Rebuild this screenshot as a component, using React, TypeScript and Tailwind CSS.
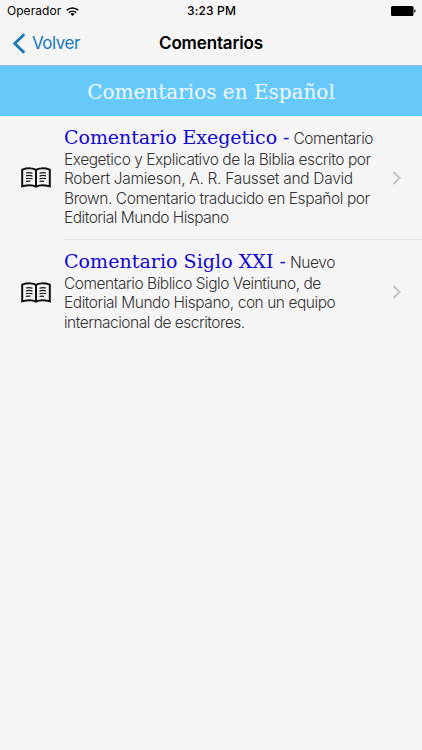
type Line = { text: string; cls: string };

type Comentario = {
  title: string;
  titleCls: string;
  lead: Line;
  lines: Line[];
  rowCls: string;
};

const comentarios: Comentario[] = [
  {
    title: "Comentario Exegetico -",
    titleCls: "tracking-[-0.05px]",
    lead: { text: "Comentario", cls: "tracking-[-0.42px]" },
    lines: [
      { text: "Exegetico y Explicativo de la Biblia escrito por", cls: "tracking-[-0.46px]" },
      { text: "Robert Jamieson, A. R. Fausset and David", cls: "tracking-[-0.3px]" },
      { text: "Brown. Comentario traducido en Español por", cls: "tracking-[-0.42px]" },
      { text: "Editorial Mundo Hispano", cls: "tracking-[-0.5px]" },
    ],
    rowCls: "h-[124px]",
  },
  {
    title: "Comentario Siglo XXI -",
    titleCls: "tracking-[0.05px]",
    lead: { text: "Nuevo", cls: "tracking-[-0.42px]" },
    lines: [
      { text: "Comentario Bíblico Siglo Veintiuno, de", cls: "tracking-[-0.47px]" },
      { text: "Editorial Mundo Hispano, con un equipo", cls: "tracking-[-0.45px]" },
      { text: "internacional de escritores.", cls: "tracking-[-0.5px]" },
    ],
    rowCls: "h-[105px]",
  },
];

export default function App() {
  return (
    <div className="h-[750px] w-[422px] overflow-hidden bg-[#f5f5f5] font-['Inter',sans-serif] text-black">
      <StatusBar />
      <NavBar />
      <h2 className="flex h-[51px] items-center justify-center border-t border-[#8fbcd3] bg-[#67c8fa] pt-px font-['DejaVu_Serif',serif] text-[20px] font-light whitespace-nowrap text-white/90">
        Comentarios en Español
      </h2>
      <ul>
        {comentarios.map((c, i) => (
          <Row key={c.title} item={c} last={i === comentarios.length - 1} />
        ))}
      </ul>
    </div>
  );
}

function StatusBar() {
  return (
    <div className="grid h-[22px] grid-cols-3 items-center pr-1.5 pl-[7px] text-[12px] leading-none">
      <div className="flex items-center gap-[5px]">
        <span className="tracking-[0.05px]">Operador</span>
        <WifiIcon />
      </div>
      <span className="text-center font-medium tracking-[0.15px] whitespace-nowrap">3:23 PM</span>
      <BatteryIcon />
    </div>
  );
}

function NavBar() {
  return (
    <header className="grid h-[43px] grid-cols-3 items-center pl-3">
      <button type="button" className="flex items-center gap-[6px] text-[17px] tracking-[-0.5px] text-[#1878be]">
        <svg className="h-[21px] w-[14px]" viewBox="0 0 14 21" fill="none" aria-hidden="true">
          <path d="M12.3 1.2 2.7 10.500l9.600 9.300" stroke="currentColor" strokeWidth="2.800" />
        </svg>
        Volver
      </button>
      <h1 className="pr-3 text-center text-[17px] font-semibold tracking-[-0.15px]">Comentarios</h1>
    </header>
  );
}

function Row({ item, last }: { item: Comentario; last: boolean }) {
  return (
    <li className={["flex", item.rowCls].join(" ")}>
      <div className="flex w-16 shrink-0 items-center pl-[21px]">
        <BookIcon />
      </div>
      <div
        className={[
          "flex flex-1 items-center border-b",
          last ? "border-transparent" : "border-[#e5e5e6]",
        ].join(" ")}
      >
        <div className="w-[328px] pb-[3px] text-[15.5px] leading-[19.2px] font-light whitespace-nowrap text-[#333]">
          <p className="flex h-[25px] items-baseline gap-1 leading-[25px]">
            <span
              className={[
                "font-['DejaVu_Serif',serif] text-[19px] font-normal text-[#1207d0]",
                item.titleCls,
              ].join(" ")}
            >
              {item.title}
            </span>
            <span className={item.lead.cls}>{item.lead.text}</span>
          </p>
          {item.lines.map((l) => (
            <p key={l.text} className={l.cls}>
              {l.text}
            </p>
          ))}
        </div>
        <svg className="h-[14px] w-[9px] text-[#c5c5c8]" viewBox="0 0 9 14" fill="none" aria-hidden="true">
          <path d="m1.500 1 6 6-6 6" stroke="currentColor" strokeWidth="2" />
        </svg>
      </div>
    </li>
  );
}

function BookIcon() {
  return (
    <svg className="h-[22px] w-[30px]" viewBox="0 0 30 22" fill="none" stroke="#111" aria-hidden="true">
      <path
        d="M15 3C13 1 6.500.8 1.200 2.600v16.800c5-1.500 11-1.400 13.800.3 2.800-1.700 8.800-1.800 13.800-.3V2.600C23.500.8 17 1 15 3Z"
        strokeWidth="2"
      />
      <path d="M15 3v17" strokeWidth="2" />
      <path
        d="M5 6q3.500-.8 6.500.3M5 8.800q3.500-.8 6.500.3M5 11.600q3.500-.8 6.500.3M5 14.400q2.500-.6 4.500-.2M18.500 6.300q3-1.100 6.500-.3M18.500 9.100q3-1.100 6.500-.3M18.500 11.900q3-1.100 6.500-.3M18.500 14.500q2-.7 4.500-.2"
        strokeWidth="1.200"
      />
    </svg>
  );
}

function WifiIcon() {
  return (
    <svg className="h-[9px] w-[13px]" viewBox="0 0 13 9" fill="none" stroke="#000" aria-hidden="true">
      <path d="M.7 3.300a8.300 8.300 0 0 1 11.600 0" strokeWidth="1.600" />
      <path d="M2.900 5.600a5.200 5.200 0 0 1 7.200 0" strokeWidth="1.500" />
      <path d="M6.500 9 4.500 7a2.900 2.900 0 0 1 4 0Z" fill="#000" stroke="none" />
    </svg>
  );
}

function BatteryIcon() {
  return (
    <svg className="h-[10px] w-[25px] justify-self-end" viewBox="0 0 25 10" aria-hidden="true">
      <rect width="22.500" height="10" rx="1.500" />
      <path d="M23.300 3.300c1.700.3 1.700 3.100 0 3.400Z" />
    </svg>
  );
}
